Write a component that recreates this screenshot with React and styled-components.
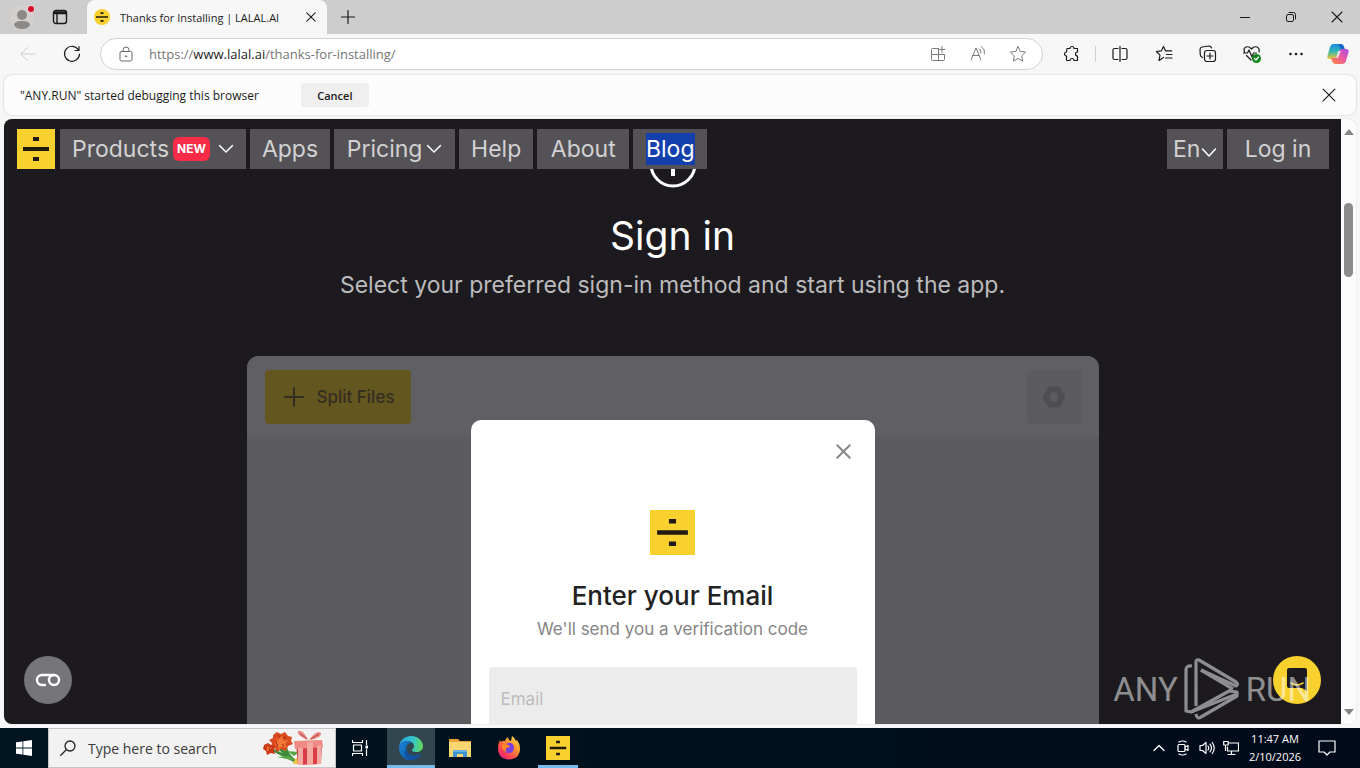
import React from "react";
import styled, { createGlobalStyle } from "styled-components";

const ui = '"Open Sans", "Noto Sans", sans-serif';
const site = 'Inter, Roboto, sans-serif';

const Global = createGlobalStyle`
  *, *::before, *::after { box-sizing: border-box; }
  body { margin: 0; background: #f7f7f7; overflow: hidden; }
  button, input, select { font: inherit; color: inherit; margin: 0; }
  svg { display: block; flex: none; }
  h1, h2, p { margin: 0; font-weight: 400; }
`;

const Desktop = styled.div`
  display: flex;
  flex-direction: column;
  height: 100vh;
  font-family: ${ui};
  font-size: 12px;
  color: #1b1b1b;
`;

const IconButton = styled.button`
  display: flex;
  align-items: center;
  justify-content: center;
  flex: none;
  width: ${(p) => p.$w || 44}px;
  height: ${(p) => p.$h || 32}px;
  padding: 0;
  border: 0;
  background: transparent;
  color: ${(p) => p.$color || "#1b1b1b"};
`;

/* browser chrome */
const TitleBar = styled.header`
  display: flex;
  flex: none;
  height: 34px;
  background: #cdcdcd;
`;
const Tab = styled.div`
  display: flex;
  align-items: center;
  gap: 10px;
  flex: none;
  width: 240px;
  margin-left: 11px;
  padding-left: 7px;
  border-radius: 8px 8px 0 0;
  background: #f7f7f7;
`;
const TabTitle = styled.span`
  flex: 1;
  font-size: 11px;
  white-space: nowrap;
`;
const Spacer = styled.div`
  flex: 1;
`;
const Toolbar = styled.div`
  display: flex;
  align-items: center;
  flex: none;
  height: 40px;
  padding: 0 2px 0 6px;
`;
const Address = styled.div`
  display: flex;
  align-items: center;
  flex: 1;
  height: 32px;
  margin: 0 7px 0 6px;
  padding: 0 4px 0 5px;
  border: 1px solid #d2d2d2;
  border-radius: 16px;
  background: #fff;
`;
const Url = styled.div`
  flex: 1;
  padding-left: 3px;
  font-size: 13px;
  color: #767676;
  outline: 0;
  b { font-weight: 400; color: #1b1b1b; }
`;
const Divider = styled.div`
  width: 1px;
  height: 16px;
  margin: 0 2px 0 1px;
  background: #d0d0d0;
`;
const InfoBar = styled.div`
  display: flex;
  align-items: center;
  flex: none;
  height: 40px;
  margin: 1px 4px 4px;
  padding: 0 5px 0 16px;
  border-radius: 8px;
  background: #fcfcfc;
  box-shadow: 0 0 2px #bbb;
`;
const CancelButton = styled.button`
  width: 68px;
  height: 24px;
  margin-left: 42px;
  padding: 0;
  border: 0;
  border-radius: 3px;
  background: #efefef;
  font-size: 11px;
  font-weight: 600;
`;

/* web page */
const Viewport = styled.div`
  display: flex;
  flex: 1;
  min-height: 0;
  margin: 0 4px 4px;
  border-radius: 8px;
  overflow: hidden;
  box-shadow: 0 0 1px #aaa;
`;
const Page = styled.main`
  position: relative;
  flex: 1;
  overflow: hidden;
  background: #1c1a1e;
  font-family: ${site};
  font-size: 23px;
  color: #fff;
`;
const Nav = styled.nav`
  position: absolute;
  z-index: 2;
  top: 10px;
  left: 13px;
  right: 12px;
  display: flex;
  gap: 4px;
  color: #d2d1d3;
`;
const NavLink = styled.a`
  display: flex;
  align-items: center;
  justify-content: center;
  gap: 4px;
  min-width: ${(p) => p.$min || 74}px;
  height: 40px;
  padding: 0 12px;
  background: #545256;
  color: inherit;
  text-decoration: none;
`;
const LogoLink = styled.a`
  margin-right: 1px;
`;
const NewBadge = styled.span`
  margin-right: 4px;
  padding: 0 4px;
  border-radius: 6px;
  background: #f92b47;
  color: #fff;
  font-size: 12px;
  font-weight: 700;
  line-height: 24px;
`;
const Selected = styled.span`
  background: #1440ae;
  color: #fff;
  line-height: 32px;
`;
const LangField = styled.label`
  display: flex;
  align-items: center;
  width: 56px;
  height: 40px;
  padding-left: 6px;
  background: #545256;
`;
const LangSelect = styled.select`
  appearance: none;
  flex: none;
  width: 28px;
  padding: 0;
  border: 0;
  background: transparent;
`;
const Step = styled.section`
  display: flex;
  flex-direction: column;
  align-items: center;
  padding-top: 21px;
`;
const StepTitle = styled.h1`
  margin-top: 20px;
  font-size: 39px;
  line-height: 56px;
`;
const StepText = styled.p`
  margin-top: 7px;
  color: #bcbbbd;
  line-height: 28px;
  white-space: nowrap;
`;
const AppShot = styled.div`
  position: relative;
  width: 852px;
  max-width: 100%;
  height: 480px;
  margin-top: 57px;
  border-radius: 12px;
  background: #5c5b5f;
  overflow: hidden;
`;
const AppBar = styled.div`
  display: flex;
  align-items: center;
  justify-content: space-between;
  height: 81px;
  padding: 0 17px 0 18px;
  background: #605f63;
`;
const SplitButton = styled.button`
  display: flex;
  align-items: center;
  justify-content: center;
  gap: 12px;
  width: 146px;
  height: 54px;
  padding: 0 0 0 4px;
  border: 0;
  border-radius: 4px;
  background: #64561f;
  color: #332e22;
  font-size: 17px;
  font-weight: 500;
`;
const GearButton = styled(IconButton)`
  border-radius: 4px;
  background: #5c5b5f;
`;
const Dialog = styled.form`
  position: absolute;
  top: 64px;
  left: 50%;
  display: flex;
  flex-direction: column;
  align-items: center;
  width: 404px;
  height: 416px;
  margin-left: -202px;
  padding: 15px 18px;
  border-radius: 10px;
  background: #fff;
  color: #222;
`;
const DialogClose = styled(IconButton)`
  align-self: flex-end;
  margin-right: -9px;
  margin-bottom: 43px;
`;
const DialogTitle = styled.h2`
  margin-top: 23px;
  font-size: 26px;
  font-weight: 500;
  line-height: 36px;
`;
const DialogText = styled.p`
  margin-top: 3px;
  color: #858585;
  font-size: 17px;
  line-height: 24px;
`;
const EmailInput = styled.input`
  width: 100%;
  height: 64px;
  margin-top: 26px;
  padding: 0 12px;
  border: 0;
  border-radius: 4px;
  background: #ececec;
  font-size: 17px;
  &::placeholder { color: #bdbdbd; opacity: 1; }
`;
const RoundButton = styled.button`
  position: absolute;
  z-index: 2;
  bottom: 20px;
  ${(p) => p.$side}: 20px;
  display: flex;
  align-items: center;
  justify-content: center;
  width: 48px;
  height: 48px;
  padding: 0;
  border: 0;
  border-radius: 50%;
  background: ${(p) => p.$bg};
`;
const Watermark = styled.div`
  position: absolute;
  z-index: 3;
  right: 30px;
  bottom: 4px;
  display: flex;
  align-items: center;
  gap: 6px;
  opacity: 0.5;
  font-family: Roboto, sans-serif;
  font-size: 33px;
  pointer-events: none;
`;
const ScrollTrack = styled.div`
  display: flex;
  flex-direction: column;
  align-items: center;
  width: 15px;
  padding: 10px 0 9px;
  background: #fcfcfc;
`;
const Thumb = styled.div`
  width: 9px;
  height: 74px;
  margin: 68px 0 auto;
  border-radius: 5px;
  background: #8b8b8b;
`;

/* taskbar */
const Taskbar = styled.footer`
  display: flex;
  flex: none;
  height: 40px;
  background: linear-gradient(90deg, #00151f, #00111d 50%, #000a1a);
  color: #fff;
`;
const SearchBox = styled.label`
  display: flex;
  align-items: center;
  gap: 12px;
  width: 288px;
  padding-left: 11px;
  border: 1px solid #c4c4c4;
  background: #f2f2f2;
  color: #222;
  font-size: 14px;
`;
const SearchInput = styled.input`
  flex: 1;
  min-width: 0;
  padding: 0;
  border: 0;
  outline: 0;
  background: transparent;
  &::placeholder { color: #3a3a3a; opacity: 1; }
`;
const Apps = styled.div`
  display: flex;
  gap: 1px;
`;
const TaskViewButton = styled(IconButton)`
  margin-right: 2px;
`;
const AppButton = styled(IconButton)`
  background: ${(p) => (p.$active ? "#32464f" : "transparent")};
  border-bottom: ${(p) => (p.$active ? "3px solid #76b9ed" : "0")};
  padding-top: ${(p) => (p.$active ? 3 : 0)}px;
`;
const RunningButton = styled(IconButton)`
  margin-left: 4px;
  padding-top: 3px;
  border-bottom: 3px solid #76b9ed;
`;
const Clock = styled.time`
  width: 64px;
  padding-top: 2px;
  font-size: 11px;
  line-height: 18px;
  text-align: center;
  white-space: nowrap;
`;

const Svg = ({ s = 20, w, h, box, sw = 1, children }) => (
  <svg width={w || s} height={h || s} viewBox={box || `0 0 ${w || s} ${h || s}`} fill="none"
    stroke="currentColor" strokeWidth={sw} strokeLinecap="round" strokeLinejoin="round" aria-hidden="true">
    {children}
  </svg>
);

const Cross = ({ s = 12, sw = 1 }) => (
  <Svg s={s} box="0 0 12 12" sw={sw}><path d="M1 1l10 10M11 1L1 11" /></Svg>
);
const Chevron = () => (
  <Svg w={16} h={10} sw={1.5}><path d="M1.500 1.500l6.500 6.500 6.500-6.500" stroke="#fff" /></Svg>
);
const LowChevron = () => (
  <Svg w={16} h={18} sw={1.5}><path d="M1.500 9l6.500 7 6.500-7" stroke="#fff" /></Svg>
);
const Divide = ({ w = 38, h = 40 }) => (
  <svg width={w} height={h} viewBox="0 0 38 40" preserveAspectRatio="none" aria-hidden="true">
    <path fill="#f8d12f" d="M0 0h38v40H0z" />
    <path fill="#201a12" d="M16 8h6v4h-6zM6 18h26v4H6zM16 28h6v4h-6z" />
  </svg>
);
const Favicon = () => (
  <svg width="16" height="16" viewBox="0 0 16 16" aria-hidden="true">
    <circle cx="8" cy="8" r="8" fill="#f8d12f" />
    <path fill="#201a12" d="M6.500 3.300h3v1.700h-3zM2 7.200h12v1.600H2zM6.500 11h3v1.700h-3z" />
  </svg>
);

const Avatar = () => (
  <svg width="26" height="28" viewBox="0 0 26 28" aria-hidden="true">
    <circle cx="13" cy="14" r="12" fill="#d3d0ce" />
    <circle cx="13" cy="12" r="5" fill="#8d8987" />
    <path d="M5 22q0-4 8-4t8 4q-2 4-8 4t-8-4z" fill="#8d8987" />
    <circle cx="22" cy="6" r="4" fill="#e6cfd0" /><circle cx="22" cy="6" r="3" fill="#d0102a" />
  </svg>
);
const Workspaces = () => (
  <Svg s={16} sw={1.4}><rect x="1.500" y="1.500" width="13" height="13" rx="2.500" /><path d="M2 3h12M1.500 4.500h13M5 5v9" /></Svg>
);
const Copilot = () => (
  <svg width="22" height="22" viewBox="0 0 22 22" aria-hidden="true">
    <defs>
      <linearGradient id="cpA" x1="0" y1="0" x2="0" y2="1"><stop stopColor="#1b8ce8" /><stop offset=".5" stopColor="#35b7b0" /><stop offset="1" stopColor="#f2c62e" /></linearGradient>
      <linearGradient id="cpB" x1="1" y1="0" x2="0" y2="1"><stop stopColor="#a64ee8" /><stop offset=".5" stopColor="#ee5b9c" /><stop offset="1" stopColor="#fb8b3c" /></linearGradient>
    </defs>
    <path d="M6 1h8q2 0 3 3l1 3h-4q-2 0-3 3l-1 4q-1 2-3 2H3q-4 0-2-5l2-7q1-3 3-3z" fill="url(#cpA)" />
    <path d="M11 1h3q2 0 3 3l1 3h-4q-2-5-3-6z" fill="#1667c9" />
    <path d="M16 21H8q-2 0-3-3l-1-3h4q2 0 3-3l1-4q1-2 3-2h4q4 0 2 5l-2 7q-1 3-3 3z" fill="url(#cpB)" />
    <path d="M11 8h3l-3 7H8q2 0 2-3z" fill="#fff" opacity=".7" />
  </svg>
);
const Flowers = () => (
  <svg width="60" height="36" viewBox="0 0 60 36" aria-hidden="true">
    <path d="M16 18l18 15M10 20l24 12M22 14q1 12 12 18" stroke="#3c8c3a" strokeWidth="3" fill="none" />
    <path d="M24 21l12 1-5 4zM14 27l12-1 8 5z" fill="#58a844" />
    <path d="M32 29l4-2-1 7-5 0z" fill="#f0c54a" />
    <path d="M10 5l4-3 4 2 4-2 3 4 4 1-1 4 2 3-5 2-2 5-5-2-4 3-2-4-4-1 1-4-3-3 4-2z" fill="#dc4a20" />
    <path d="M1 15l4-2 3 2 4 1-1 4 1 4-4-1-4 2-1-4-3-2z" fill="#cd3716" />
    <path d="M12 7l3 3 4-4 2 5 5-1-4 4 2 4-5-2-3 4-1-5-4-1 4-2zM4 16l3 2 2-1-2 3-3 1z" fill="#f37936" />
    <path d="M15 5l2 2M20 8l3-1M13 13l2 2M19 14l2 2M6 18l1 3" stroke="#9e2510" />
    <path d="M33 14l26-2-1 22-23 1z" fill="#d93d46" />
    <path d="M31 11l28-1 1 7-28 2z" fill="#ef8b84" />
    <path d="M35 18l5 0v17l-5 0zM44 12h6v23h-6zM54 16l4-1v19h-4z" fill="#f4aaa0" />
    <path d="M45 10Q33 5 35 1q5-2 10 9zM46 10Q54-1 58 3q1 5-12 7z" fill="#eb8c84" />
    <path d="M44 9q-6-5-7-5M48 9q6-4 8-5" stroke="#b03941" fill="none" />
  </svg>
);
const Edge = () => (
  <svg width="26" height="26" viewBox="0 0 26 26" aria-hidden="true">
    <defs>
      <linearGradient id="eg" x1="0" y1="0.300" x2="1" y2="0.400"><stop stopColor="#2a9fe0" /><stop offset=".6" stopColor="#35c6c4" /><stop offset="1" stopColor="#62d957" /></linearGradient>
      <linearGradient id="eb" x1="0" y1="0" x2="1" y2="1"><stop stopColor="#1a86dc" /><stop offset="1" stopColor="#0f4d9a" /></linearGradient>
    </defs>
    <path d="M1 13C1 6 6 1 13 1s12 5 12 10c0 4-3 6-7 6-3 0-4-1-4-2 0-1 2-1 2-4 0-3-3-5-7-5-4 0-8 3-8 7z" fill="url(#eg)" />
    <path d="M1 13c0-4 4-7 8-7 3 0 5 1 6 2-5-1-7 3-7 7 0 6 5 9 9 9-9 4-16-3-16-11z" fill="url(#eb)" />
    <path d="M9 13c-1 6 4 10 14 6q1 0 0 1c-3 4-7 5-10 5-6-1-8-8-4-12z" fill="#12519f" />
  </svg>
);
const Folder = () => (
  <svg width="22" height="20" viewBox="0 0 22 20" aria-hidden="true">
    <path d="M0 1h9l2 2h11v4H0z" fill="#e8a33a" /><path d="M0 4h22v15H0z" fill="#fbd671" />
    <path d="M4 12h14v7h-4v-3H8v3H4z" fill="#3d93d2" /><path d="M4 12h14v2H4z" fill="#62b0e4" />
  </svg>
);
const Firefox = () => (
  <svg width="24" height="24" viewBox="0 0 24 24" aria-hidden="true">
    <defs><linearGradient id="fx" x1="1" y1="0" x2="0.200" y2="1"><stop stopColor="#fff04a" /><stop offset=".4" stopColor="#ff9a2e" /><stop offset=".8" stopColor="#fb3b54" /><stop offset="1" stopColor="#e0228a" /></linearGradient></defs>
    <path d="M3 4l1 2q2-2 4-1 1-3 3-4 0 3 3 4l1-5q3 2 4 5l1-1q3 4 3 8 0 11-11 11.500Q1 23 1 12q0-4 2-8z" fill="url(#fx)" />
    <path d="M11 7q5-1 6 4 0 6-5 6-5 0-6-5l5 0q-2-2-3-3z" fill="#7a3fe0" />
    <path d="M5 9q3-2 6 0l2 1q-1 2-4 2-1 2 1 4-5-1-5-7z" fill="#ff8a24" />
  </svg>
);
const WatermarkMark = () => (
  <svg width="56" height="62" viewBox="0 0 56 62" fill="none" stroke="#fff" strokeWidth="3.200" strokeLinejoin="round" aria-hidden="true">
    <path d="M8 8Q2 7 2 12V53l5 1L53 36" />
    <path d="M7 54l40-22" />
    <path d="M12 48V4q0-3 3-2L52 24q3 2 0 4L17 12" />
    <path d="M12 56q1 6 5 3L53 38V34L45 33" />
    <path d="M17 12l32 19" />
  </svg>
);

export default function App() {
  return (
    <>
      <Global />
      <Desktop>
        <TitleBar>
          <IconButton $w={44} $h={34} aria-label="Profile"><Avatar /></IconButton>
          <IconButton $w={32} $h={34} aria-label="Tab actions"><Workspaces /></IconButton>
          <Tab>
            <Favicon />
            <TabTitle>Thanks for Installing | LALAL.AI</TabTitle>
            <IconButton $w={32} aria-label="Close tab"><Cross s={10} sw={1.3} /></IconButton>
          </Tab>
          <IconButton $w={42} $h={34} aria-label="New tab"><Svg s={14} sw={1.2}><path d="M7 .5v13M.5 7h13" /></Svg></IconButton>
          <Spacer />
          <IconButton $w={46} $h={34} aria-label="Minimize"><Svg s={10}><path d="M0 5.500h10" /></Svg></IconButton>
          <IconButton $w={46} $h={34} aria-label="Restore"><Svg s={10}><rect x=".5" y="2.500" width="7" height="7" rx="1.500" /><path d="M3 .5h4.500q2 0 2 2V7" /></Svg></IconButton>
          <IconButton $w={46} $h={34} aria-label="Close"><Cross s={12} sw={1.1} /></IconButton>
        </TitleBar>

        <Toolbar>
          <IconButton $color="#cfcfcf" aria-label="Back"><Svg s={16}><path d="M15 8H1M7.500 1.500L1 8l6.500 6.500" /></Svg></IconButton>
          <IconButton aria-label="Refresh"><Svg s={18} sw={1.2}><path d="M15.500 5A7.500 7.500 0 1 0 16.500 9M16 1.500V5.500H12" /></Svg></IconButton>
          <Address>
            <IconButton $w={40} $color="#6a6a6a" aria-label="Site information">
              <Svg s={16}><rect x="2" y="5.500" width="12" height="9.500" rx="1.500" /><path d="M5 5.500V4a3 3 0 0 1 6 0v1.500" /><circle cx="8" cy="10.300" r=".6" fill="currentColor" /></Svg>
            </IconButton>
            <Url role="textbox" aria-label="Address">https://<b>www.lalal.ai</b>/thanks-for-installing/</Url>
            <IconButton $w={40} $color="#7b7b7b" aria-label="Apps"><Svg s={16}><path d="M8.500 2.500H2.500q-1 0-1 1v10q0 1 1 1h11q1 0 1-1V8.500h-13M8.500 2.500v12M12 .5v6M9.500 3.500h5.500" /></Svg></IconButton>
            <IconButton $w={40} $color="#7b7b7b" aria-label="Read aloud"><Svg s={16}><path d="M1 14L6 2l5 12M2.800 9.500h6.400M9.500 3q2 2 1.500 4M11.500.5q4 3 3 7.500" /></Svg></IconButton>
            <IconButton $w={40} $color="#7b7b7b" aria-label="Add to favorites"><Svg s={18}><path d="M9 1.500l2.300 4.900 5.300.7-3.900 3.700 1 5.300L9 13.500l-4.700 2.600 1-5.300L1.400 7.100l5.300-.7z" /></Svg></IconButton>
          </Address>
          <IconButton aria-label="Extensions"><Svg s={18} sw={1.2}><path d="M4 3.500h3a2 2 0 0 1 4 0h3.500V7a1.200 1.200 0 0 0 0 4v4.500H11a2 2 0 0 0-4 0H4q-.5 0-.5-.5v-4a2 2 0 1 1 0-4z" /></Svg></IconButton>
          <Divider />
          <IconButton aria-label="Split screen"><Svg s={16} sw={1.2}><path d="M6 2.500H2.500q-1.500 0-1.500 1.500v8q0 1.500 1.500 1.500H6M10 2.500h3.500q1.500 0 1.500 1.500v8q0 1.500-1.500 1.500H10M8 .5v15" /></Svg></IconButton>
          <IconButton aria-label="Favorites"><Svg s={18} sw={1.2}><path d="M8.500 12.500L4 15.500l1-5.300L1.400 6.500l4.900-.6L8.500 1.500l2.100 4.400h6M11.500 9.500h5.500M10.500 13h6.500" /></Svg></IconButton>
          <IconButton aria-label="Collections"><Svg s={18} sw={1.2}><rect x="5.500" y="5.500" width="11" height="11" rx="2.500" /><path d="M11 8v6M8 11h6M3.500 12.500q-2-1-2.200-2.500L1 4.500Q1 2.500 3 2l7-1q2 0 2.500 2" /></Svg></IconButton>
          <IconButton aria-label="Browser essentials">
            <Svg s={20} sw={1.2}><path d="M2.500 8Q1 4.500 4 3q3-1 5.500 2Q12 2 15 3q3 1.500 2 5M4.500 11.500L9 16M1.500 9h4l1.500-3 3 7 1.500-4h3" /><circle cx="14.500" cy="14.500" r="4.500" fill="#13851d" stroke="none" /><path d="M12.500 14.500l1.500 1.500 2.500-3" stroke="#fff" /></Svg>
          </IconButton>
          <IconButton aria-label="Settings and more"><Svg w={14} h={4} sw={0}><g fill="currentColor"><circle cx="1.500" cy="2" r="1.300" /><circle cx="7" cy="2" r="1.300" /><circle cx="12.500" cy="2" r="1.300" /></g></Svg></IconButton>
          <IconButton $w={40} aria-label="Copilot"><Copilot /></IconButton>
        </Toolbar>

        <InfoBar>
          <span>"ANY.RUN" started debugging this browser</span>
          <CancelButton>Cancel</CancelButton>
          <Spacer />
          <IconButton aria-label="Dismiss"><Cross s={14} /></IconButton>
        </InfoBar>

        <Viewport>
          <Page>
            <Nav>
              <LogoLink href="#home" aria-label="LALAL.AI"><Divide /></LogoLink>
              <NavLink href="#products">Products<NewBadge>NEW</NewBadge><Chevron /></NavLink>
              <NavLink href="#apps">Apps</NavLink>
              <NavLink href="#pricing" $min={121}>Pricing<Chevron /></NavLink>
              <NavLink href="#help">Help</NavLink>
              <NavLink href="#about" $min={92}>About</NavLink>
              <NavLink href="#blog"><Selected>Blog</Selected></NavLink>
              <Spacer />
              <LangField>
                <LangSelect aria-label="Language" defaultValue="en"><option value="en">En</option></LangSelect>
                <LowChevron />
              </LangField>
              <NavLink href="#login" $min={102}>Log in</NavLink>
            </Nav>

            <Step>
              <Svg s={48} sw={3}><circle cx="24" cy="24" r="22" stroke="#fff" /><path d="M24 12v24" stroke="#fff" strokeWidth="4" strokeLinecap="butt" /></Svg>
              <StepTitle>Sign in</StepTitle>
              <StepText>Select your preferred sign-in method and start using the app.</StepText>
              <AppShot>
                <AppBar>
                  <SplitButton><Svg s={20} sw={2}><path d="M10 1v18M1 10h18" /></Svg>Split Files</SplitButton>
                  <GearButton $w={55} $h={54} $color="#4f4e52" aria-label="Settings">
                    <Svg s={24} sw={6}><path d="M8 4.500h8l4 7.500-4 7.500H8L4 12z" /></Svg>
                  </GearButton>
                </AppBar>
                <Dialog onSubmit={(e) => e.preventDefault()}>
                  <DialogClose type="button" $color="#868686" aria-label="Close dialog"><Cross s={15} sw={1.5} /></DialogClose>
                  <Divide w={45} h={45} />
                  <DialogTitle>Enter your Email</DialogTitle>
                  <DialogText>We'll send you a verification code</DialogText>
                  <EmailInput type="email" placeholder="Email" aria-label="Email" />
                </Dialog>
              </AppShot>
            </Step>

            <RoundButton $side="left" $bg="#757478" aria-label="Cookie settings">
              <Svg w={26} h={14} sw={2.4}><path d="M10 12H7A5 5 0 0 1 7 2h12" stroke="#fff" /><circle cx="19" cy="7" r="5" stroke="#fff" /></Svg>
            </RoundButton>
            <RoundButton $side="right" $bg="#f8d12f" aria-label="Chat">
              <Svg w={22} h={26} sw={1.6}><path d="M3 1h16q2 0 2 2v21l-5-3H3q-2 0-2-2V3q0-2 2-2z" fill="#1c1a1e" stroke="none" /><path d="M5 16q6 4 12 0" stroke="#f8d12f" /></Svg>
            </RoundButton>
            <Watermark aria-hidden="true"><span>ANY</span><WatermarkMark /><span>RUN</span></Watermark>
          </Page>
          <ScrollTrack>
            <svg width="10" height="6" aria-hidden="true"><path d="M0 6l5-6 5 6z" fill="#858585" /></svg>
            <Thumb />
            <svg width="10" height="6" aria-hidden="true"><path d="M0 0l5 6 5-6z" fill="#858585" /></svg>
          </ScrollTrack>
        </Viewport>

        <Taskbar>
          <IconButton $w={48} $h={40} $color="#fff" aria-label="Start">
            <svg width="16" height="16" viewBox="0 0 16 16" aria-hidden="true"><path fill="#fff" d="M0 2.300L6.500 1.400V7.600H0zM7.300 1.300L16 0v7.600H7.300zM0 8.400h6.500v6.200L0 13.700zM7.300 8.400H16V16l-8.700-1.300z" /></svg>
          </IconButton>
          <SearchBox>
            <Svg s={16} sw={1.3}><circle cx="10" cy="6" r="5" /><path d="M6.500 9.500L.8 15.200" /></Svg>
            <SearchInput placeholder="Type here to search" aria-label="Search" />
            <Flowers />
            <span />
          </SearchBox>
          <Apps>
            <TaskViewButton $w={48} $h={40} $color="#fff" aria-label="Task view"><Svg s={16} sw={1.2}><path d="M.5.5v2h10v-2M.5 15.500v-2h10v2M1.500 5h8v6h-8zM14.500.5v4M14.500 9.500v6" /><path d="M14 6h1.500v2H14z" fill="#fff" /></Svg></TaskViewButton>
            <AppButton $active $w={48} $h={40} aria-label="Edge"><Edge /></AppButton>
            <AppButton $w={48} $h={40} aria-label="File Explorer"><Folder /></AppButton>
            <AppButton $w={48} $h={40} aria-label="Firefox"><Firefox /></AppButton>
            <RunningButton $w={40} $h={40} aria-label="LALAL.AI"><Divide w={24} h={24} /></RunningButton>
          </Apps>
          <Spacer />
          <IconButton $w={24} $h={40} $color="#fff" aria-label="Hidden icons"><Svg w={12} h={8} sw={1.3}><path d="M1 6.500l5-5 5 5" /></Svg></IconButton>
          <IconButton $w={24} $h={40} $color="#fff" aria-label="Meet now"><Svg s={16} sw={1.2}><rect x="3" y="4.500" width="7" height="7" rx="1" /><path d="M10 7l3-1.500v5L10 9M4 2q3.500-2 7 0M4 14q3.500 2 7 0" /></Svg></IconButton>
          <IconButton $w={24} $h={40} $color="#fff" aria-label="Volume"><Svg s={16} sw={1.2}><path d="M1 5.500h2.500L7 2.500v11l-3.500-3H1zM9 6q1.500 2 0 4M11 4.200q3 3.800 0 7.600M13.200 2.500q4 5.500 0 11" /></Svg></IconButton>
          <IconButton $w={24} $h={40} $color="#fff" aria-label="Network"><Svg s={16} sw={1.2}><path d="M6 3h9.500v8H4.500V7M5 14.500h7M8.500 11v3.500M.7 1.500h4.500V5H.7zM2.500 5v5.500" /></Svg></IconButton>
          <Clock>11:47 AM<br />2/10/2026</Clock>
          <IconButton $w={40} $h={40} $color="#fff" aria-label="Notifications"><Svg w={18} h={16} sw={1.2}><path d="M1 1h16v11h-5l-3 3-3-3H1z" /></Svg></IconButton>
          <Svg w={13} h={4} />
        </Taskbar>
      </Desktop>
    </>
  );
}
